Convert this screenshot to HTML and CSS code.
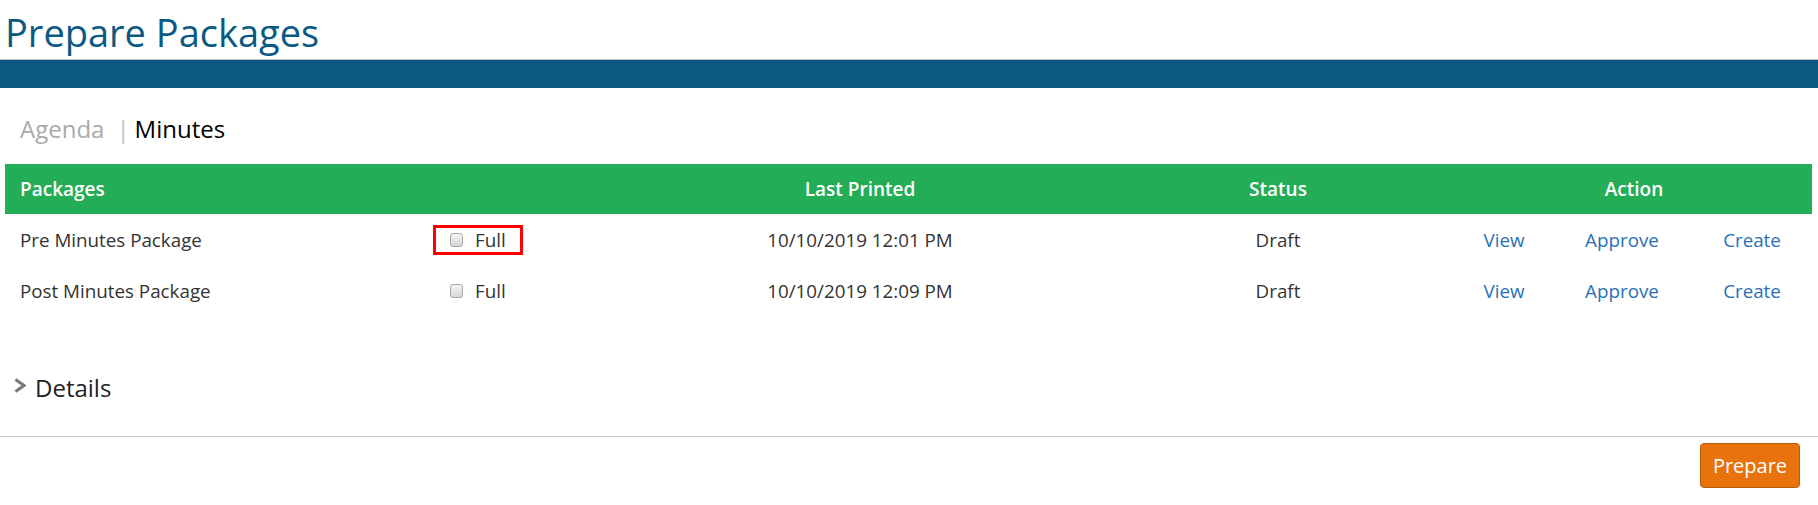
FILE: index.html
```html
<!DOCTYPE html>
<html lang="en">
<head>
    <meta charset="UTF-8">
    <meta name="viewport" content="width=device-width, initial-scale=1.0">
    <title>Prepare Packages</title>
    <link rel="stylesheet" href="styles.css">
</head>
<body>
    <h1 class="page-title">Prepare Packages</h1>
    <div class="title-bar"></div>

    <div class="tabs">
        <a href="#" class="tab">Agenda</a>
        <span class="tab-sep">|</span>
        <a href="#" class="tab active">Minutes</a>
    </div>

    <div class="packages">
        <div class="pkg-row pkg-head">
            <div class="cell name">Packages</div>
            <div class="cell"></div>
            <div class="cell center">Last Printed</div>
            <div class="cell center status">Status</div>
            <div class="cell center action-head">Action</div>
        </div>
        <div class="pkg-row">
            <div class="cell name">Pre Minutes Package</div>
            <div class="cell">
                <label class="full-opt highlight"><input type="checkbox"> Full</label>
            </div>
            <div class="cell center">10/10/2019 12:01 PM</div>
            <div class="cell center status">Draft</div>
            <div class="cell center"><a href="#">View</a></div>
            <div class="cell center"><a href="#">Approve</a></div>
            <div class="cell center last"><a href="#">Create</a></div>
        </div>
        <div class="pkg-row">
            <div class="cell name">Post Minutes Package</div>
            <div class="cell">
                <label class="full-opt"><input type="checkbox"> Full</label>
            </div>
            <div class="cell center">10/10/2019 12:09 PM</div>
            <div class="cell center status">Draft</div>
            <div class="cell center"><a href="#">View</a></div>
            <div class="cell center"><a href="#">Approve</a></div>
            <div class="cell center last"><a href="#">Create</a></div>
        </div>
    </div>

    <div class="details">
        <svg class="chevron" width="12" height="15" viewBox="0 0 12 15">
            <polyline points="1.5,1.5 10,7.5 1.5,13.5" fill="none" stroke="#7a7a7a" stroke-width="3"/>
        </svg>
        <span>Details</span>
    </div>

    <div class="footer-bar">
        <button class="prepare-btn">Prepare</button>
    </div>
</body>
</html>
```
FILE: styles.css
```css
body {
    font-family: "Open Sans", "Liberation Sans", sans-serif;
    margin: 0;
    padding: 0;
    color: #333;
    background: #fff;
}
.page-title {
    margin: 0;
    padding: 6px 0 0 5px;
    height: 53px;
    line-height: 53px;
    font-size: 38px;
    font-weight: 400;
    color: #0b5a84;
}
.title-bar {
    border-top: 1px solid #c2c2c2;
    height: 28px;
    background-color: #0b5880;
}
.tabs {
    display: flex;
    align-items: baseline;
    padding: 26px 0 20px 20px;
    line-height: 30px;
    font-size: 24px;
}
.tab {
    color: #aaa;
    text-decoration: none;
}
.tab.active {
    color: #000;
}
.tab-sep {
    color: #c4c4c4;
    margin: 0 5px 0 12px;
}
.packages {
    margin: 0 6px 0 5px;
}
.pkg-row {
    display: grid;
    grid-template-columns: 428px 267px 320px 424px 120px 116px 132px;
    height: 51px;
    align-items: center;
    font-size: 18.8px;
}
.pkg-row.pkg-head {
    height: 50px;
    background-color: #23ad57;
    color: #fff;
    font-weight: 600;
    font-size: 19px;
}
.cell.name {
    padding-left: 15px;
}
.cell.center {
    text-align: center;
}
.cell.status {
    padding-left: 92px;
}
.cell.last {
    padding-left: 12px;
}
.action-head {
    grid-column: 5 / 8;
    padding-left: 12px;
}
.cell a {
    color: #2a6fb6;
    text-decoration: none;
}
.full-opt {
    display: inline-flex;
    align-items: center;
    box-sizing: border-box;
    height: 30px;
    padding: 0 14px 0 14px;
    border: 3px solid transparent;
    gap: 12px;
    font-size: 18.8px;
}
.full-opt.highlight {
    border-color: #f00;
}
.full-opt input {
    appearance: none;
    margin: 0;
    width: 13px;
    height: 14px;
    border: 1px solid #a8a8a8;
    border-radius: 3px;
    background: linear-gradient(#f4f4f4, #d6d6d6);
    box-sizing: border-box;
}
.details {
    display: flex;
    align-items: center;
    padding: 57px 0 33px 14px;
    line-height: 30px;
    font-size: 24px;
    color: #222;
}
.chevron {
    margin-right: 9px;
    margin-bottom: 5px;
}
.footer-bar {
    border-top: 1px solid #c6c6c6;
    padding: 6px 18px 0 0;
    display: flex;
    justify-content: flex-end;
}
.prepare-btn {
    width: 100px;
    height: 45px;
    background-color: #e8720c;
    border: 1px solid #b95c0a;
    border-radius: 4px;
    color: #fff;
    font-family: "Open Sans", "Liberation Sans", sans-serif;
    font-size: 20px;
    cursor: pointer;
}
```
